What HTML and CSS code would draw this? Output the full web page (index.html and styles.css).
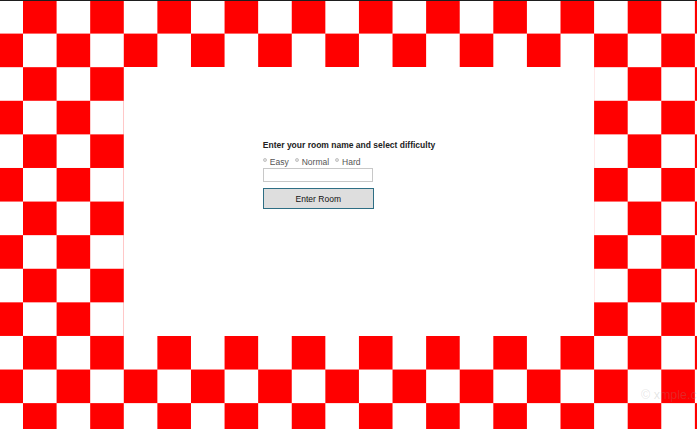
FILE: index.html
```html
<!DOCTYPE html>
<html>
<head>
<meta charset="utf-8">
<link rel="stylesheet" href="styles.css">
</head>
<body>
<div class="board">
  <div class="panel">
    <form class="room-form">
      <p class="title">Enter your room name and select difficulty</p>
      <div class="levels">
        <label class="opt"><span class="radio"></span>Easy</label>
        <label class="opt"><span class="radio"></span>Normal</label>
        <label class="opt"><span class="radio"></span>Hard</label>
      </div>
      <input class="room-name" type="text">
      <button class="enter" type="button">Enter Room</button>
    </form>
  </div>
  <div class="mark">© xmple.c</div>
</div>
</body>
</html>
```
FILE: styles.css
```css
html, body {
  margin: 0;
  padding: 0;
  background: #fff;
}

.board {
  position: relative;
  width: 697px;
  height: 429px;
  overflow: hidden;
  box-sizing: border-box;
  padding: 67.2px 0 0 123.8px;
  background-color: #fff;
  background-image: conic-gradient(#ff0000 0 25%, #ffffff 0 50%, #ff0000 0 75%, #ffffff 0);
  background-size: 67.2px 67.2px;
  background-position: -10.6px 0;
  box-shadow: inset 0 1px 0 #1e1e1e;
}

.panel {
  width: 470.4px;
  height: 268.8px;
  box-sizing: border-box;
  background: #fff;
  padding: 73px 0 0 139px;
  font-family: "Liberation Sans", Arial, sans-serif;
}

.room-form {
  margin: 0;
}

.title {
  margin: 0;
  font-size: 8.5px;
  line-height: 10px;
  font-weight: bold;
  color: #222;
}

.levels {
  display: flex;
  margin-top: 7px;
  font-size: 8.5px;
  line-height: 10px;
  color: #555;
}

.opt {
  display: flex;
  align-items: flex-start;
  margin-right: 6px;
}

.radio {
  display: block;
  width: 2px;
  height: 2px;
  border: 1px solid #c4c4c4;
  border-radius: 50%;
  background: #e4e4e4;
  margin: 1px 3px 0 0;
}

.room-name {
  display: block;
  margin: 1px 0 0 0;
  width: 110px;
  height: 14px;
  box-sizing: border-box;
  border: 1px solid #c8c8c8;
  padding: 0 2px;
  background: #fff;
  outline: none;
}

.enter {
  display: block;
  margin-top: 6px;
  width: 111px;
  height: 21px;
  box-sizing: border-box;
  border: 1px solid #2e6e84;
  background: #dedede;
  font-family: "Liberation Sans", Arial, sans-serif;
  font-size: 8.5px;
  color: #111;
  padding: 0;
}

.mark {
  position: absolute;
  left: 641px;
  top: 388px;
  font-family: "Liberation Sans", Arial, sans-serif;
  font-size: 12.5px;
  color: rgba(150, 150, 150, 0.25);
  white-space: nowrap;
}
```
